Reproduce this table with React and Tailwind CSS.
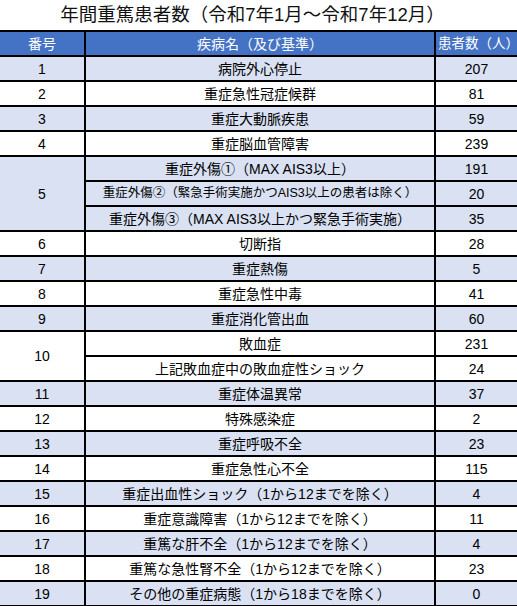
import React from 'react';

// 表の行データ（サブ行があるものは items を配列で持つ）
const rows = [
  { no: 1, items: [['病院外心停止', 207]] },
  { no: 2, items: [['重症急性冠症候群', 81]] },
  { no: 3, items: [['重症大動脈疾患', 59]] },
  { no: 4, items: [['重症脳血管障害', 239]] },
  {
    no: 5,
    items: [
      ['重症外傷①（MAX AIS3以上）', 191],
      ['重症外傷②（緊急手術実施かつAIS3以上の患者は除く）', 20, 'small'],
      ['重症外傷③（MAX AIS3以上かつ緊急手術実施）', 35],
    ],
  },
  { no: 6, items: [['切断指', 28]] },
  { no: 7, items: [['重症熱傷', 5]] },
  { no: 8, items: [['重症急性中毒', 41]] },
  { no: 9, items: [['重症消化管出血', 60]] },
  {
    no: 10,
    items: [
      ['敗血症', 231],
      ['上記敗血症中の敗血症性ショック', 24],
    ],
  },
  { no: 11, items: [['重症体温異常', 37]] },
  { no: 12, items: [['特殊感染症', 2]] },
  { no: 13, items: [['重症呼吸不全', 23]] },
  { no: 14, items: [['重症急性心不全', 115]] },
  { no: 15, items: [['重症出血性ショック（1から12までを除く）', 4]] },
  { no: 16, items: [['重症意識障害（1から12までを除く）', 11]] },
  { no: 17, items: [['重篤な肝不全（1から12までを除く）', 4]] },
  { no: 18, items: [['重篤な急性腎不全（1から12までを除く）', 23]] },
  { no: 19, items: [['その他の重症病態（1から18までを除く）', 0]] },
];

const cell = 'border-2 border-black h-[25px] p-0 text-center align-middle whitespace-nowrap';

const App = () => {
  return (
    <div
      className="w-[517px] h-[606px] overflow-hidden bg-white text-black"
      style={{ fontFamily: '"Liberation Sans", "Noto Sans CJK JP", sans-serif' }}
    >
      <div className="h-[30px] flex items-center justify-center pr-3 text-[18.5px] leading-none text-[#111]">
        年間重篤患者数（令和7年1月～令和7年12月）
      </div>

      <table className="border-collapse table-fixed w-[524px] text-[14px] leading-none">
        <colgroup>
          <col className="w-[85px]" />
          <col className="w-[350px]" />
          <col className="w-[89px]" />
        </colgroup>
        <thead>
          <tr className="bg-[#4472C4] text-white">
            <th className={`${cell} border-l-0 font-normal`}>番号</th>
            <th className={`${cell} font-normal`}>疾病名（及び基準）</th>
            <th className={`${cell} font-normal text-left pl-[2px] text-[13.5px]`}>患者数（人）</th>
          </tr>
        </thead>
        <tbody>
          {rows.map((r, i) => {
            const bg = i % 2 === 0 ? 'bg-[#D9E1F2]' : 'bg-white';
            return r.items.map((it, j) => (
              <tr key={`${r.no}-${j}`} className={bg}>
                {j === 0 && (
                  <td rowSpan={r.items.length} className={`${cell} border-l-0`}>
                    {r.no}
                  </td>
                )}
                <td className={`${cell} ${it[2] === 'small' ? 'text-[12.5px]' : ''}`}>{it[0]}</td>
                <td className={`${cell} pr-[6px]`}>{it[1]}</td>
              </tr>
            ));
          })}
        </tbody>
      </table>
    </div>
  );
};

export default App;
